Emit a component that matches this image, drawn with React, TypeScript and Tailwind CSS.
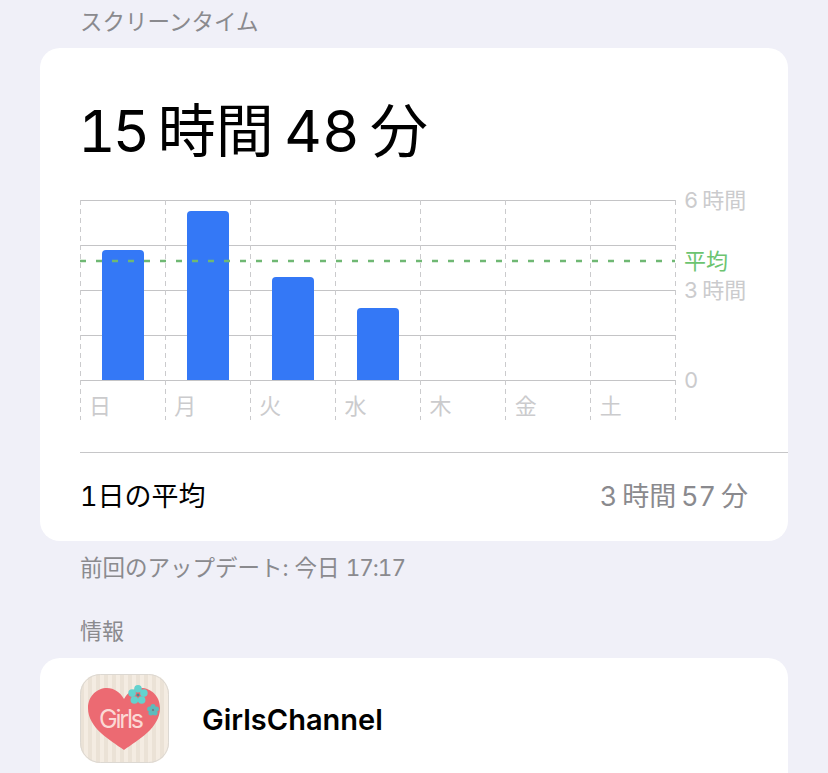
const days = ["日", "月", "火", "水", "木", "金", "土"];
const bars = [
  { x: 22, top: 50 },
  { x: 107, top: 11 },
  { x: 192, top: 77 },
  { x: 277, top: 108 },
];

function Chart() {
  return (
    <div className="flex h-[220px]">
      <div className="relative h-[220px] w-[596px] pt-[190px]">
        <svg width="596" height="220" className="absolute left-0 top-0">
          {[0, 45, 90, 135, 180].map((y) => (
            <line key={y} x1="0" x2="595" y1={y + 0.5} y2={y + 0.5} stroke="#c4c4c6" />
          ))}
          {[0, 85, 170, 255, 340, 425, 510, 595].map((x) => (
            <line key={x} x1={x + 0.5} x2={x + 0.5} y1="0" y2="220" stroke="#cbcbcd" strokeDasharray="5 4" />
          ))}
          {bars.map((b) => (
            <path
              key={b.x}
              d={`M${b.x} 180V${b.top + 4}a4 4 0 0 1 4 -4h34a4 4 0 0 1 4 4V180z`}
              fill="#3478f6"
            />
          ))}
          <line x1="0" x2="595" y1="61" y2="61" stroke="#6fb873" strokeWidth="2.5" strokeDasharray="6 10" />
        </svg>
        <div className="relative grid grid-cols-7 text-[22px] leading-[32px] text-[#cbcbcd]">
          {days.map((d) => (
            <span key={d} className="pl-[9px]">{d}</span>
          ))}
        </div>
      </div>
      <div className="ml-[8px] -mt-[15px] flex flex-col whitespace-nowrap text-[22px] leading-[30px] tabular-nums text-[#cbcbcd]">
        <span>6{"\u2009"}時間</span>
        <span className="mt-[31px] text-[#6cc470]">平均</span>
        <span className="-mt-px">3{"\u2009"}時間</span>
        <span className="mt-[60px]">0</span>
      </div>
    </div>
  );
}

function Flower({ cx, cy, r, d, fill }: { cx: number; cy: number; r: number; d: number; fill: string }) {
  return (
    <g>
      {[0, 72, 144, 216, 288].map((a) => (
        <circle
          key={a}
          cx={cx + d * Math.sin((a * Math.PI) / 180)}
          cy={cy - d * Math.cos((a * Math.PI) / 180)}
          r={r}
          fill={fill}
        />
      ))}
      <circle cx={cx} cy={cy} r={r * 0.4} fill="#3f8f95" />
    </g>
  );
}

function AppIcon() {
  return (
    <svg width="89" height="89" viewBox="0 0 89 89" className="shrink-0">
      <defs>
        <pattern id="stripes" width="8" height="8" patternUnits="userSpaceOnUse">
          <rect width="8" height="8" fill="#f4ece2" />
          <rect width="4" height="8" fill="#ebe2d6" />
        </pattern>
      </defs>
      <rect width="89" height="89" rx="20" fill="url(#stripes)" />
      <rect x="0.5" y="0.5" width="88" height="88" rx="20" fill="none" stroke="#dcd8d2" />
      <path
        d="M44 76C30 66 8 54 8 34C8 22 17 14 27 14C34 14 40 18 44 25C48 18 54 14 61 14C71 14 80 22 80 34C80 54 58 66 44 76Z"
        fill="#ec6a72"
      />
      <text x="19" y="54" fontSize="25" fontWeight="400" textLength="45" fill="#fbd9d5" fontFamily="Inter, sans-serif">
        Girls
      </text>
      <Flower cx={58} cy={21} r={3.8} d={6.2} fill="#63d2ce" />
      <Flower cx={73} cy={36} r={2.5} d={3.6} fill="#5cbcbc" />
    </svg>
  );
}

export default function App() {
  return (
    <div className="h-[773px] overflow-hidden bg-[#f0f0f8] px-10 font-['Inter','Noto_Sans_CJK_JP',sans-serif]">
      <p className="h-[48px] pl-10 pt-[6px] text-[22.5px] leading-[32px] text-[#8a8a8e]">スクリーンタイム</p>

      <div className="h-[493px] rounded-[20px] bg-white pl-10">
        <h1 className="h-[152px] pt-[44px] text-[58px] leading-[78px] tabular-nums text-black">
          <span className="-ml-[2px] tracking-[-3px]">15</span>
          {"\u2009"}時間{"\u2009"}48{"\u2009"}分
        </h1>
        <Chart />
        <div className="mt-[32px] flex h-[89px] items-center justify-between border-t border-[#c6c6c8] pr-10 pt-px text-[27px] tabular-nums">
          <span className="text-black">1日の平均</span>
          <span className="text-[#8a8a8e]">3{"\u2009"}時間{"\u2009"}57{"\u2009"}分</span>
        </div>
      </div>

      <p className="h-[65px] pl-10 pt-[11px] text-[22.5px] leading-[32px] tabular-nums text-[#8a8a8e]">
        前回のアップデート: 今日 <span className="tracking-[-1px]">17:17</span>
      </p>
      <p className="h-[52px] pl-10 pt-[9px] text-[22px] leading-[32px] text-[#8a8a8e]">情報</p>

      <div className="flex h-[140px] items-start gap-[33px] rounded-t-[20px] bg-white pl-10 pt-4">
        <AppIcon />
        <span className="mt-[28px] text-[29px] font-semibold leading-[36px] text-black">GirlsChannel</span>
      </div>
    </div>
  );
}
